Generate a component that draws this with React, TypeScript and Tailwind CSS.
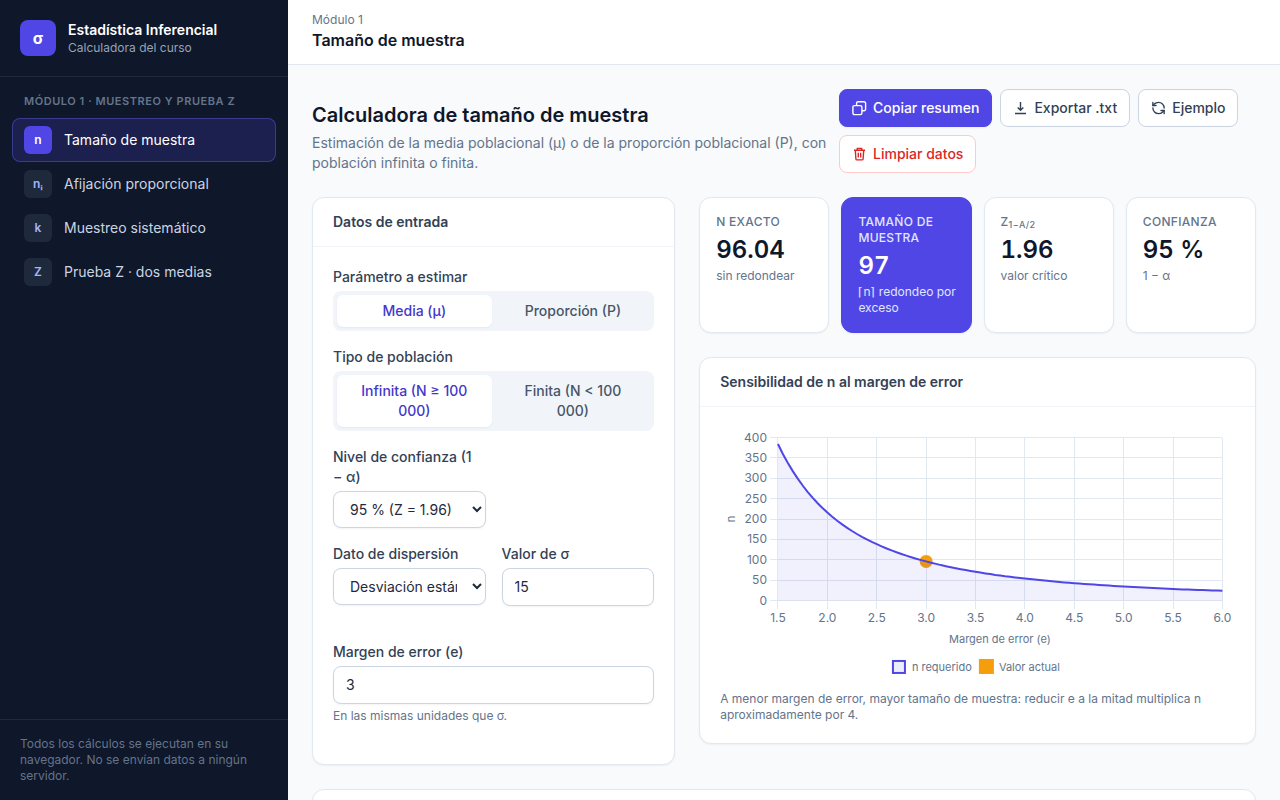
import React, { useMemo, useState } from 'react';
import { RefreshCcw } from 'lucide-react';

interface NavItem {
  id: string;
  symbol: string;
  label: string;
}

const NAV_ITEMS: NavItem[] = [
  { id: 'tamano', symbol: 'n', label: 'Tamaño de muestra' },
  { id: 'afijacion', symbol: 'nᵢ', label: 'Afijación proporcional' },
  { id: 'sistematico', symbol: 'k', label: 'Muestreo sistemático' },
  { id: 'pruebaz', symbol: 'Z', label: 'Prueba Z · dos medias' },
];

const ICON = 'h-4 w-[15px] shrink-0';

const CopyIcon = () => (
  <svg className={ICON} viewBox="0 0 15 16" fill="none" stroke="currentColor" strokeWidth="1.4" aria-hidden="true">
    <rect x="0.9" y="5.6" width="9" height="9" rx="1.5" />
    <path d="M4.6 5.6V3.2a1.5 1.5 0 0 1 1.5-1.5h6a1.5 1.5 0 0 1 1.5 1.5v6a1.5 1.5 0 0 1-1.5 1.5H9.9" />
  </svg>
);

const DownloadIcon = () => (
  <svg className={ICON} viewBox="0 0 15 16" fill="none" stroke="currentColor" strokeWidth="1.4" aria-hidden="true">
    <path d="M7.5 2v8M4.7 7.4l2.8 2.8 2.8-2.8M2 13.5h11" />
  </svg>
);

const TrashIcon = () => (
  <svg className={ICON} viewBox="0 0 15 16" fill="none" stroke="currentColor" strokeWidth="1.4" aria-hidden="true">
    <path d="M2 4.2h11M5.3 4V2.4h4.4V4M3.3 4.4l.6 8.6a1 1 0 0 0 1 .9h5.2a1 1 0 0 0 1-.9l.6-8.6M6.3 6.8v4.6M8.7 6.8v4.6" />
  </svg>
);

const Sidebar: React.FC<{ active: string; onSelect: (id: string) => void }> = ({ active, onSelect }) => (
  <aside className="sticky top-0 flex h-screen w-72 shrink-0 flex-col bg-[#0f172a]">
    <div className="flex items-center gap-3 border-b border-[#1e293b] p-5">
      <div className="flex h-9 w-9 items-center justify-center rounded-lg bg-[#4f46e5] font-bold text-white">σ</div>
      <div>
        <p className="text-sm font-semibold text-white">Estadística Inferencial</p>
        <p className="text-xs text-[#94a3b8]">Calculadora del curso</p>
      </div>
    </div>
    <nav className="flex-1 overflow-y-auto px-3 py-4">
      <p className="mb-2 px-3 text-[11px] leading-[17px] font-semibold tracking-wider text-[#64748b] uppercase">
        Módulo 1 · Muestreo y prueba Z
      </p>
      {NAV_ITEMS.map(item => (
        <button
          key={item.id}
          type="button"
          onClick={() => onSelect(item.id)}
          className={
            item.id === active
              ? 'flex w-full items-center gap-3 rounded-lg bg-[#4f46e5]/20 px-3 py-2 text-left text-sm text-white ring-1 ring-[#6366f1]/40 ring-inset'
              : 'flex w-full items-center gap-3 rounded-lg px-3 py-2 text-left text-sm text-[#cbd5e1] hover:bg-[#1e293b]'
          }
        >
          <span
            className={
              item.id === active
                ? 'flex h-7 w-7 items-center justify-center rounded-md bg-[#4f46e5] text-xs font-semibold text-white'
                : 'flex h-7 w-7 items-center justify-center rounded-md bg-[#1e293b] text-xs font-semibold text-[#a5b4fc]'
            }
          >
            {item.symbol}
          </span>
          {item.label}
        </button>
      ))}
    </nav>
    <div className="border-t border-[#1e293b] px-5 py-4 text-xs text-[#64748b]">
      Todos los cálculos se ejecutan en su navegador. No se envían datos a ningún servidor.
    </div>
  </aside>
);

const Card: React.FC<{ title: string; className?: string; children: React.ReactNode }> = ({ title, className = '', children }) => (
  <section className={`rounded-xl border border-[#e2e8f0] bg-white shadow-xs ${className}`}>
    <h3 className="border-b border-[#f1f5f9] px-5 py-3.5 text-sm font-semibold text-[#334155]">{title}</h3>
    <div className="p-5">{children}</div>
  </section>
);

const Segmented: React.FC<{
  label: string;
  options: string[];
  value: number;
  onChange: (index: number) => void;
}> = ({ label, options, value, onChange }) => (
  <div role="group" aria-label={label}>
    <p className="mb-1 text-sm font-medium text-[#334155]">{label}</p>
    <div className="grid grid-cols-2 gap-1 rounded-lg bg-[#f1f5f9] p-1">
      {options.map((option, i) => (
        <button
          key={option}
          type="button"
          aria-pressed={i === value}
          onClick={() => onChange(i)}
          className={
            i === value
              ? 'rounded-md bg-white px-3 py-1.5 text-sm font-medium text-[#4338ca] shadow-xs'
              : 'rounded-md px-3 py-1.5 text-sm font-medium text-[#475569]'
          }
        >
          {option}
        </button>
      ))}
    </div>
  </div>
);

const Kpi: React.FC<{ label: React.ReactNode; value: string; hint: React.ReactNode; highlight?: boolean }> = ({ label, value, hint, highlight }) => (
  <div
    className={
      highlight
        ? 'rounded-xl border border-[#4f46e5] bg-[#4f46e5] p-4 text-white shadow-xs'
        : 'rounded-xl border border-[#e2e8f0] bg-white p-4 text-[#0f172a] shadow-xs'
    }
  >
    <p className={highlight ? 'text-xs font-medium tracking-wide text-[#e0e7ff] uppercase' : 'text-xs font-medium tracking-wide text-[#64748b] uppercase'}>
      {label}
    </p>
    <p className="mt-1 text-2xl font-semibold tabular-nums">{value}</p>
    <p className={highlight ? 'mt-0.5 text-xs text-[#e0e7ff]' : 'mt-0.5 text-xs text-[#64748b]'}>{hint}</p>
  </div>
);

// Plot area inside the 515x256 drawing
const LEFT = 58;
const RIGHT = 502.6;
const TOP = 10.5;
const BOTTOM = 173.6;

const xOf = (e: number) => LEFT + ((e - 1.5) / 4.5) * (RIGHT - LEFT);
const yOf = (n: number) => BOTTOM - (n / 400) * (BOTTOM - TOP);

const SensitivityChart: React.FC<{ sigma: number; z: number; error: number }> = ({ sigma, z, error }) => {
  const line = useMemo(() => {
    const points: string[] = [];
    for (let i = 0; i <= 90; i++) {
      const e = 1.5 + i * 0.05;
      points.push(`${xOf(e).toFixed(1)},${yOf((z * sigma / e) ** 2).toFixed(1)}`);
    }
    return points.join(' ');
  }, [sigma, z]);

  const xTicks = [1.5, 2, 2.5, 3, 3.5, 4, 4.5, 5, 5.5, 6];
  const yTicks = [0, 50, 100, 150, 200, 250, 300, 350, 400];

  return (
    <svg className="h-64 w-full" viewBox="0 0 515 256" role="img" aria-label="Curva de n según el margen de error">
      <g stroke="#e2e8f0" shapeRendering="crispEdges">
        {xTicks.map(t => <line key={t} x1={xOf(t)} x2={xOf(t)} y1={TOP} y2={BOTTOM + 8} />)}
        {yTicks.map(t => <line key={t} x1={LEFT - 8} x2={RIGHT} y1={yOf(t)} y2={yOf(t)} />)}
      </g>
      <circle cx={xOf(error)} cy={yOf((z * sigma / error) ** 2)} r="6.5" fill="#f59e0b" />
      <polygon points={`${LEFT},${BOTTOM} ${line} ${RIGHT},${BOTTOM}`} fill="#4f46e5" fillOpacity="0.08" />
      <polyline points={line} fill="none" stroke="#4f46e5" strokeWidth="2" />
      <g fill="#64748b" fontSize="12">
        {xTicks.map(t => <text key={t} x={xOf(t)} y="195" textAnchor="middle">{t.toFixed(1)}</text>)}
        {yTicks.map(t => <text key={t} x="47" y={yOf(t) + 4} textAnchor="end">{t}</text>)}
      </g>
      <g fill="#64748b" fontSize="11">
        <text x="280" y="216" textAnchor="middle">Margen de error (e)</text>
        <text transform="translate(15 92) rotate(-90)" textAnchor="middle">n</text>
        <rect x="173" y="234" width="12" height="12" fill="#eeedfc" stroke="#4f46e5" strokeWidth="2" />
        <text x="192" y="244">n requerido</text>
        <rect x="259" y="232" width="15" height="15" fill="#f59e0b" />
        <text x="279" y="244">Valor actual</text>
      </g>
    </svg>
  );
};

const BUTTON = 'inline-flex items-center gap-1.5 rounded-lg border px-3 py-2 text-sm font-medium';
const FIELD = 'block w-full rounded-lg border border-[#cbd5e1] bg-white px-3 py-2 text-sm text-[#1e293b] shadow-xs';
const LABEL = 'mb-1 block text-sm font-medium text-[#334155]';

const App: React.FC = () => {
  const [active, setActive] = useState('tamano');
  const [parameter, setParameter] = useState(0);
  const [population, setPopulation] = useState(0);
  const [sigma, setSigma] = useState('15');
  const [margin, setMargin] = useState('3');

  return (
    <div className="flex min-h-screen bg-[#f8fafc] font-[Inter,sans-serif] text-[#1e293b]">
      <Sidebar active={active} onSelect={setActive} />
      <div className="min-w-0 flex-1">
        <header className="border-b border-[#e2e8f0] bg-white px-6 py-3">
          <p className="text-xs text-[#64748b]">Módulo 1</p>
          <h1 className="text-base font-semibold text-[#0f172a]">Tamaño de muestra</h1>
        </header>
        <main className="space-y-6 p-6">
          <div className="grid grid-cols-[1fr_417px] items-end gap-3">
            <div>
              <h2 className="text-xl font-semibold text-[#0f172a]">Calculadora de tamaño de muestra</h2>
              <p className="mt-1 text-sm text-[#64748b]">
                Estimación de la media poblacional (μ) o de la proporción poblacional (P), con población infinita o finita.
              </p>
            </div>
            <div className="flex flex-wrap gap-2">
              <button type="button" className={`${BUTTON} border-[#4f46e5] bg-[#4f46e5] text-white shadow-xs`}>
                <CopyIcon /> Copiar resumen
              </button>
              <button type="button" className={`${BUTTON} border-[#cbd5e1] bg-white text-[#334155]`}>
                <DownloadIcon /> Exportar .txt
              </button>
              <button type="button" className={`${BUTTON} border-[#cbd5e1] bg-white text-[#334155]`}>
                <RefreshCcw className={ICON} strokeWidth={2.2} /> Ejemplo
              </button>
              <button type="button" className={`${BUTTON} border-[#fecaca] bg-white text-[#dc2626]`}>
                <TrashIcon /> Limpiar datos
              </button>
            </div>
          </div>

          <div className="grid grid-cols-5 items-start gap-6">
            <Card title="Datos de entrada" className="col-span-2">
              <form className="space-y-4" onSubmit={e => e.preventDefault()}>
                <Segmented label="Parámetro a estimar" options={['Media (μ)', 'Proporción (P)']} value={parameter} onChange={setParameter} />
                <Segmented label="Tipo de población" options={['Infinita (N ≥ 100 000)', 'Finita (N < 100 000)']} value={population} onChange={setPopulation} />
                <div className="grid grid-cols-2 gap-4">
                  <div>
                    <label htmlFor="confianza" className={LABEL}>Nivel de confianza (1 −&nbsp;α)</label>
                    <select id="confianza" className={FIELD}>
                      <option>95 % (Z = 1.96)</option>
                    </select>
                  </div>
                </div>
                <div className="grid grid-cols-2 gap-4">
                  <div>
                    <label htmlFor="dispersion" className={LABEL}>Dato de dispersión</label>
                    <select id="dispersion" className={FIELD}>
                      <option>Desviación estándar (σ)</option>
                      <option>Varianza (σ²)</option>
                    </select>
                  </div>
                  <div>
                    <label htmlFor="sigma" className={LABEL}>Valor de σ</label>
                    <input id="sigma" className={FIELD} value={sigma} onChange={e => setSigma(e.target.value)} />
                    <p className="mt-1 min-h-4 text-xs text-[#dc2626]" />
                  </div>
                </div>
                <div>
                  <label htmlFor="margen" className={LABEL}>Margen de error (e)</label>
                  <input id="margen" className={FIELD} value={margin} onChange={e => setMargin(e.target.value)} />
                  <p className="mt-1 text-xs text-[#64748b]">En las mismas unidades que σ.</p>
                  <p className="mt-1 min-h-4 text-xs text-[#dc2626]" />
                </div>
              </form>
            </Card>

            <div className="col-span-3 space-y-6">
              <div className="grid grid-cols-4 gap-3">
                <Kpi label="n exacto" value="96.04" hint="sin redondear" />
                <Kpi
                  label="Tamaño de muestra"
                  value="97"
                  hint={<><span className="whitespace-nowrap">⌈n⌉ redondeo por</span> exceso</>}
                  highlight
                />
                <Kpi label={<>Z<sub>1−α/2</sub></>} value="1.96" hint="valor crítico" />
                <Kpi label="Confianza" value="95 %" hint="1 − α" />
              </div>
              <Card title="Sensibilidad de n al margen de error">
                <SensitivityChart sigma={15} z={1.96} error={3} />
                <p className="mt-2 text-xs text-[#64748b]">
                  A menor margen de error, mayor tamaño de muestra: reducir e a la mitad multiplica n aproximadamente por 4.
                </p>
              </Card>
            </div>
          </div>

          <section className="min-h-24 rounded-xl border border-[#e2e8f0] bg-white shadow-xs" />
        </main>
      </div>
    </div>
  );
};

export default App;
